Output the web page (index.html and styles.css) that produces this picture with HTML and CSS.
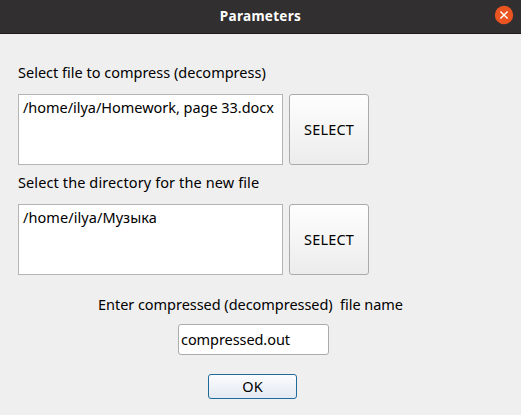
FILE: index.html
```
<!DOCTYPE html>
<html lang="en">
<head>
<meta charset="utf-8">
<title>Parameters</title>
<link rel="stylesheet" href="styles.css">
</head>
<body>
<header class="titlebar">
  <h1 class="title">Parameters</h1>
  <svg class="close" width="20" height="20" viewBox="0 0 20 20"><circle cx="10" cy="10" r="9.2" fill="#e95420"/><path d="M6.4 6.4l7.2 7.2M13.6 6.4l-7.2 7.2" stroke="#fff" stroke-width="1.4" fill="none"/></svg>
</header>
<main class="dialog">
  <div class="label"><span class="t-file">Select file to compress (decompress)</span></div>
  <div class="row">
    <div class="path"><span class="t-doc">/home/ilya/Homework, page 33.docx</span></div>
    <button class="select"><span class="t-select">SELECT</span></button>
  </div>
  <div class="label"><span class="t-dir">Select the directory for the new file</span></div>
  <div class="row">
    <div class="path"><span class="t-music">/home/ilya/Музыка</span></div>
    <button class="select"><span class="t-select">SELECT</span></button>
  </div>
  <div class="label name-label"><span class="t-name">Enter compressed (decompressed)&nbsp; file name</span></div>
  <div class="name"><span class="t-out">compressed.out</span></div>
  <button class="ok"><span class="t-ok">OK</span></button>
</main>
</body>
</html>
```
FILE: styles.css
```
* { box-sizing: border-box; }
body {
  margin: 0;
  height: 415px;
  overflow: hidden;
  background: #efefef;
  color: #000;
  font: 14.5px/20px "Noto Sans", sans-serif;
  white-space: nowrap;
}
.titlebar {
  display: grid;
  grid-template-columns: 1fr auto 1fr;
  height: 34px;
  background: #322f30;
  border-bottom: 1px solid #1d191c;
  color: #fff;
}
.title {
  grid-column: 2;
  margin: 6px 0 0;
  font-size: 13.5px;
  line-height: 20px;
  font-weight: 700;
  letter-spacing: 0.3px;
}
.close { justify-self: end; margin: 5px 7px 0 0; }
.dialog { padding: 28px 0 0 18px; }
.label { height: 20px; }
.row { display: flex; gap: 6px; margin: 12px 0 7px; }
.path {
  width: 265px;
  height: 71px;
  padding: 2px 4px;
  background: #fff;
  border: 1px solid #b4b4b4;
}
button {
  display: flex;
  align-items: center;
  justify-content: center;
  padding: 0 0 2px;
  color: #000;
  font: inherit;
  border-radius: 3px;
}
.select {
  width: 80px;
  height: 71px;
  border: 1px solid #ababab;
  background: linear-gradient(#fefefe, #ececec);
}
.name-label { margin: 19px 0 10px 80px; }
.name {
  width: 151px;
  height: 31px;
  margin-left: 160px;
  padding: 4px 2px;
  background: #fff;
  border: 1px solid #ababab;
  border-radius: 3px;
}
.ok {
  width: 89px;
  height: 25px;
  margin: 19px 0 0 190px;
  border: 1px solid #206a9b;
  background: linear-gradient(#fbfcfe, #e3e9f2);
}
.t-doc { letter-spacing: -0.03px; }
.t-dir { letter-spacing: 0.11px; }
.t-music { letter-spacing: 0.07px; }
.t-name { letter-spacing: -0.04px; }
.t-out { letter-spacing: -0.07px; }
.t-select { letter-spacing: 0.15px; }
```
